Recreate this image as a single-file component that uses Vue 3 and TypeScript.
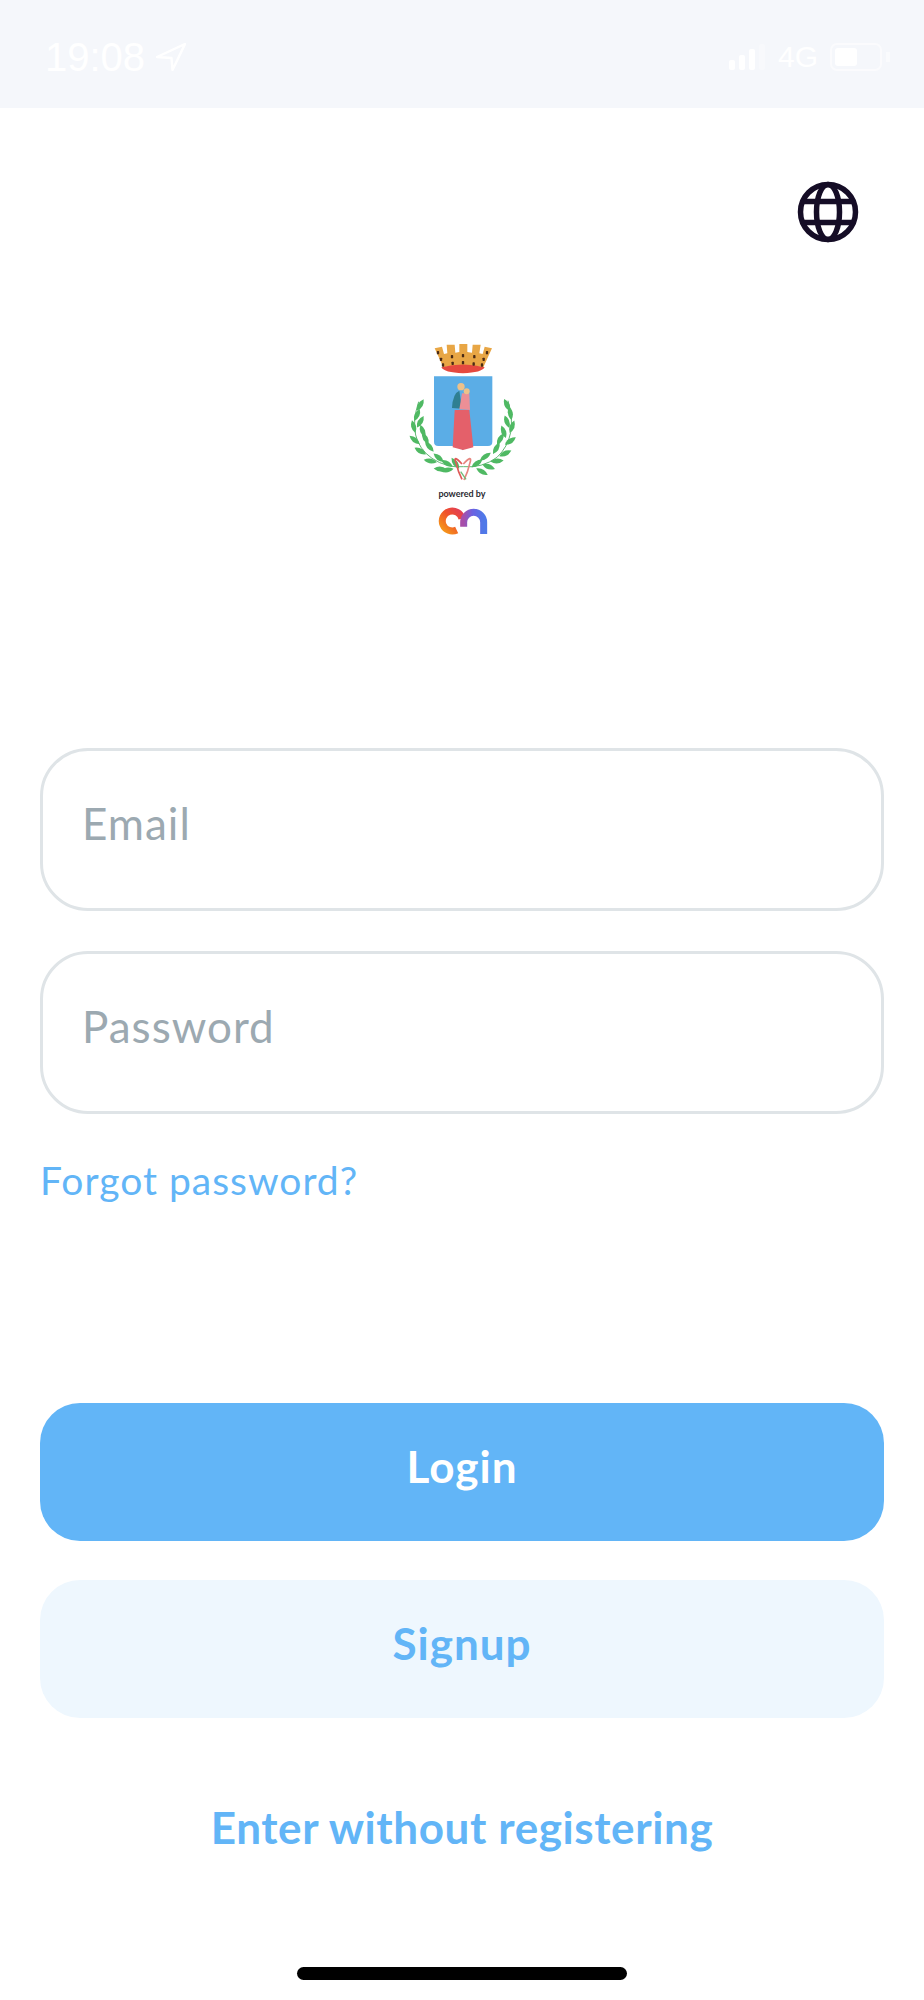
<script setup lang="ts">
type Leaf = [number, number, number]
const signal: number[] = [10, 15, 21, 26]
const windows: [number, number][] = [
  [168, 68], [210, 80], [243, 77], [277, 80], [315, 68], [177, 88], [183, 105], [212, 100], [243, 98], [275, 102], [305, 88], [300, 105],
]
const zoomLeaves: Leaf[] = [
  [55, 30, -60], [45, 60, -65], [55, 80, -60], [35, 95, 75], [62, 108, 70], [38, 135, 40], [70, 130, 60], [55, 168, 30], [82, 155, 50],
  [85, 198, 10], [110, 188, 40], [115, 222, 5], [135, 205, 30], [135, 225, -10], [160, 205, 55],
  [315, 30, 65], [325, 55, 80], [315, 80, 70], [330, 95, -70], [305, 110, 70], [325, 138, -35], [295, 132, -60], [310, 175, -25],
  [283, 160, -60], [250, 185, -35], [285, 198, -5], [260, 215, 20], [240, 230, 30], [225, 205, -35],
]
const leaves = zoomLeaves.map(([x, y, a]) => `translate(${x + 60} ${y + 195}) rotate(${a})`)
</script>

<template>
  <div class="screen">
    <header class="status">
      <div class="time-wrap">
        <span class="time">19:08</span>
        <svg class="arrow" width="30" height="28" viewBox="0 0 30 28" fill="none">
          <path d="M29 1 L1 14 L15.5 15 L16.5 27 Z" stroke="#fff" stroke-width="2.4" stroke-linejoin="round" />
        </svg>
      </div>
      <div class="status-right">
        <div class="signal">
          <i v-for="(h, n) in signal" :key="n" :class="{ off: n === 3 }" :style="{ height: h + 'px' }"></i>
        </div>
        <span class="net">4G</span>
        <div class="battery"><div class="charge"></div></div>
        <div class="nub"></div>
      </div>
    </header>

    <main class="content">
      <div class="lang">
        <svg width="62" height="62" viewBox="0 0 62 62" fill="none" stroke="#150d26" stroke-width="5.5">
          <circle cx="31" cy="31" r="27.5" />
          <ellipse cx="31" cy="31" rx="11.5" ry="27.5" />
          <path d="M5 20.5 H57 M5 41.5 H57" />
        </svg>
      </div>

      <div class="logo">
        <svg class="emblem" width="160" height="210" viewBox="0 0 480 630">
          <g class="soft">
            <path d="M158 55 L180 50 L186 72 L196 70 L194 44 L218 44 L220 68 L232 66 L232 42 L256 42 L256 66 L270 68 L272 44 L296 44 L292 70 L302 72 L308 50 L330 55 L304 112 Q243 100 184 112 Z" fill="#e8a645" />
            <path d="M178 112 Q243 95 308 112 Q300 128 243 130 Q186 128 178 112 Z" fill="#e5493f" />
            <rect v-for="(w, n) in windows" :key="'w' + n" :x="w[0] - 3.5" :y="w[1] - 5" width="7" height="10" rx="2" fill="#4a2a15" />
            <path d="M156 139 H331 V335 Q331 348 318 348 H262 Q248 350 242 361 Q236 350 222 348 H169 Q156 348 156 335 Z" fill="#5bade6" />
            <path d="M212 352 L218 240 L262 240 L274 352 L243 360 Z" fill="#e4606a" />
            <path d="M210 234 Q212 190 232 182 L240 236 Z" fill="#2f7f92" />
            <path d="M232 238 L240 190 L262 190 L264 240 Z" fill="#ec8f96" />
            <circle cx="237" cy="170" r="11" fill="#edc18a" />
            <circle cx="254" cy="184" r="9" fill="#edc18a" />
            <path d="M110 215 Q72 330 150 385 Q195 415 245 410 Q300 415 345 382 Q410 320 378 212" fill="none" stroke="#62b874" stroke-width="3" />
            <path v-for="(t, n) in leaves" :key="'l' + n" d="M-20 0 Q0 -15 20 0 Q0 15 -20 0 Z" fill="#4fb963" :transform="t" />
            <path d="M240 402 Q212 372 222 398 Q228 425 240 448" fill="none" stroke="#df5a58" stroke-width="5" />
            <path d="M244 402 Q272 372 264 398 Q258 425 246 450" fill="none" stroke="#e7857f" stroke-width="5" />
            <path d="M236 425 L252 448" fill="none" stroke="#6fbb78" stroke-width="4" />
          </g>
          <defs>
            <linearGradient id="mc" x1="0" x2="1" y1="1" y2="0">
              <stop offset="0" stop-color="#f59a1a" />
              <stop offset="0.55" stop-color="#f0522a" />
              <stop offset="1" stop-color="#e23d57" />
            </linearGradient>
            <linearGradient id="ma" x1="0" x2="1" y1="0" y2="0">
              <stop offset="0" stop-color="#a84ea8" />
              <stop offset="0.45" stop-color="#6a62e2" />
              <stop offset="1" stop-color="#4f79e8" />
            </linearGradient>
          </defs>
          <g class="soft">
            <path d="M224 600 A30 30 0 1 1 240 566" fill="none" stroke="url(#mc)" stroke-width="21" />
            <path d="M245 590 V577 A30 30 0 0 1 305 577 V612" fill="none" stroke="url(#ma)" stroke-width="21" />
          </g>
        </svg>
        <span class="powered">powered by</span>
      </div>

      <div class="field first">Email</div>
      <div class="field second">Password</div>
      <a class="forgot">Forgot password?</a>

      <button class="btn primary">Login</button>
      <button class="btn secondary">Signup</button>
      <a class="guest">Enter without registering</a>

      <div class="home"></div>
    </main>
  </div>
</template>

<style scoped>
.screen {
  width: 924px;
  height: 2000px;
  background: #fff;
  font-family: Lato, "Open Sans", sans-serif;
  overflow: hidden;
}
.status {
  height: 108px;
  background: #f5f7fb;
  display: flex;
  align-items: center;
  justify-content: space-between;
  padding: 20px 34px 14px 45px;
  box-sizing: border-box;
  color: #fff;
  font-family: "Liberation Sans", sans-serif;
}
.time-wrap { display: flex; align-items: center; gap: 11px; }
.time { font-size: 40px; line-height: 40px; }
.status-right { display: flex; align-items: center; }
.signal { display: flex; align-items: flex-end; gap: 4px; height: 26px; margin-right: 13px; }
.signal i { width: 6px; background: #fff; border-radius: 2px; }
.signal i.off { opacity: 0.3; }
.net { font-size: 30px; line-height: 32px; margin-right: 12px; }
.battery {
  width: 52px; height: 28px; box-sizing: border-box;
  border: 2px solid rgba(255,255,255,0.55); border-radius: 7px; padding: 3px;
}
.charge { width: 22px; height: 100%; background: #fff; border-radius: 3px; }
.nub { width: 4px; height: 10px; background: rgba(255,255,255,0.5); margin-left: 4px; }
.content { display: flex; flex-direction: column; padding: 0 40px; }
.lang { display: flex; justify-content: flex-end; padding: 73px 25px 0 0; height: 62px; }
.logo {
  position: relative;
  align-self: center;
  width: 160px; height: 210px;
  margin-top: 87px;
}
.emblem { display: block; }
.soft { filter: blur(0.6px); }
.powered {
  position: absolute; left: 0; right: 0; top: 158px; text-align: center;
  font-size: 9px; line-height: 12px; font-weight: 700; color: #2b2b33;
}
.field {
  box-sizing: border-box;
  height: 163px;
  border: 3px solid #dfe4e7;
  border-radius: 48px;
  padding: 47px 0 0 39px;
  font-size: 44px;
  line-height: 50px;
  letter-spacing: 1px;
  color: #9ca9b1;
}
.first { margin-top: 208px; }
.second { margin-top: 40px; }
.forgot { margin-top: 44px; font-size: 39px; line-height: 44px; letter-spacing: 1px; color: #62b5f7; }
.btn {
  display: block; width: 100%; height: 138px; border: 0; border-radius: 40px;
  font-family: inherit; font-size: 44px; font-weight: 700; letter-spacing: 1px; padding: 0 0 12px;
}
.primary { background: #62b5f7; color: #fff; margin-top: 201px; }
.secondary { background: #eef7fe; color: #62b5f7; margin-top: 39px; }
.guest {
  margin-top: 84px; text-align: center; font-size: 44px; line-height: 50px; font-weight: 700; letter-spacing: 0.6px; color: #62b5f7;
}
.home { align-self: center; width: 330px; height: 13px; border-radius: 7px; background: #000; margin-top: 115px; }
</style>
